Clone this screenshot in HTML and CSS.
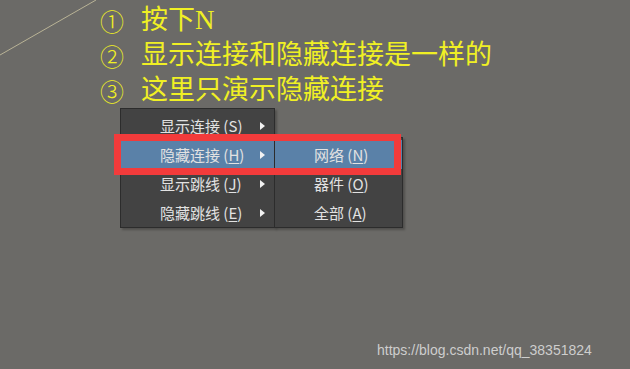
FILE: index.html
```html
<!DOCTYPE html>
<html lang="zh">
<head>
<meta charset="utf-8">
<link rel="stylesheet" href="styles.css">
</head>
<body>
<div class="canvas">
  <svg class="diag" width="110" height="70" viewBox="0 0 110 70"><line x1="0" y1="55" x2="96" y2="0" stroke="#b9b396" stroke-width="1"/></svg>
  <div class="notes">
    <div class="line"><span class="num">①</span><span class="txt">按下N</span></div>
    <div class="line"><span class="num">②</span><span class="txt">显示连接和隐藏连接是一样的</span></div>
    <div class="line"><span class="num">③</span><span class="txt">这里只演示隐藏连接</span></div>
  </div>

  <div class="menu main">
    <div class="item"><span>显示连接 (<u>S</u>)</span><i class="arrow"></i></div>
    <div class="item active"><span>隐藏连接 (<u>H</u>)</span><i class="arrow"></i></div>
    <div class="item"><span>显示跳线 (<u>J</u>)</span><i class="arrow"></i></div>
    <div class="item"><span>隐藏跳线 (<u>E</u>)</span><i class="arrow"></i></div>
  </div>

  <div class="menu sub">
    <div class="item active"><span>网络 (<u>N</u>)</span></div>
    <div class="item"><span>器件 (<u>O</u>)</span></div>
    <div class="item"><span>全部 (<u>A</u>)</span></div>
  </div>

  <div class="redbox"></div>

  <div class="watermark">https://blog.csdn.net/qq_38351824</div>
</div>
</body>
</html>
```
FILE: styles.css
```css
html, body {
  margin: 0;
  padding: 0;
  background: #6b6a67;
}
.canvas {
  position: relative;
  width: 630px;
  height: 369px;
  overflow: hidden;
  background: #6b6a67;
}
.diag {
  position: absolute;
  left: 0;
  top: 0;
}
.notes {
  padding: 3px 0 0 100px;
  color: #f0f024;
  font-family: "Liberation Serif", "Noto Sans CJK SC", serif;
  font-size: 27px;
  line-height: 35px;
}
.line {
  display: flex;
  align-items: center;
  height: 35px;
}
.notes .num {
  display: inline-block;
  width: 41px;
  font-family: "Noto Sans CJK SC", sans-serif;
  font-size: 24px;
  font-weight: 300;
  line-height: 30px;
}
.menu {
  position: absolute;
  box-sizing: border-box;
  background: #434343;
  border: 1px solid #2c2c2c;
  box-shadow: 2px 2px 2px rgba(0,0,0,0.25);
  font-family: "Noto Sans CJK SC", sans-serif;
  font-size: 15px;
  color: #e2e2e2;
}
.menu.main {
  left: 120px;
  top: 108px;
  width: 155px;
  height: 120px;
  padding-top: 2px;
}
.menu.sub {
  left: 274px;
  top: 137px;
  width: 129px;
  height: 91px;
  padding-top: 2px;
}
.item {
  height: 29px;
  display: flex;
  align-items: center;
  padding-left: 39px;
  position: relative;
}
.item span {
  line-height: 29px;
}
.item u {
  text-underline-offset: 2px;
}
.item.active {
  background: #5a81a8;
}
.arrow {
  position: absolute;
  left: 139px;
  top: 11px;
  width: 0;
  height: 0;
  border-top: 4px solid transparent;
  border-bottom: 4px solid transparent;
  border-left: 5px solid #f2f2f2;
}
.redbox {
  position: absolute;
  left: 114px;
  top: 134px;
  width: 287px;
  height: 41px;
  box-sizing: border-box;
  border: 7px solid #f23b3b;
}
.watermark {
  position: absolute;
  left: 377px;
  top: 342px;
  font-family: "Liberation Sans", sans-serif;
  font-size: 14px;
  color: #d9d9d9;
  opacity: 0.9;
}
```
